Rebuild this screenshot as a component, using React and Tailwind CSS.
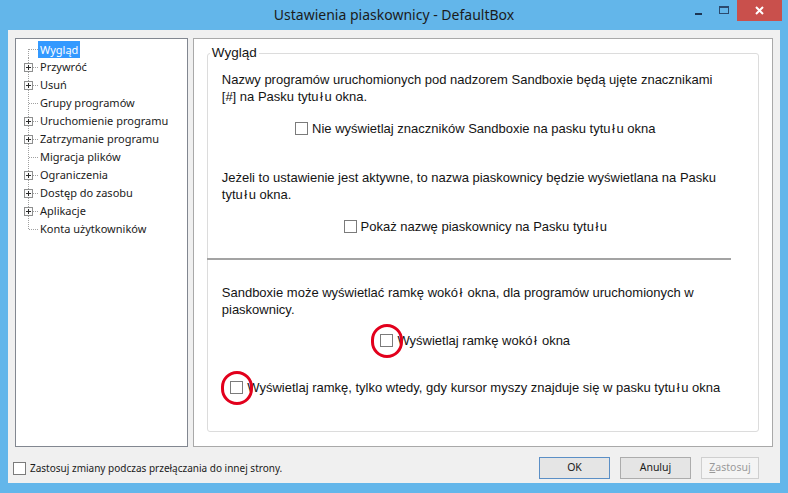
import React from "react";

const tree = [
  ["Wygląd", false],
  ["Przywróć", true],
  ["Usuń", true],
  ["Grupy programów", false],
  ["Uruchomienie programu", true],
  ["Zatrzymanie programu", true],
  ["Migracja plików", false],
  ["Ograniczenia", true],
  ["Dostęp do zasobu", true],
  ["Aplikacje", true],
  ["Konta użytkowników", false],
];

// the "ł" in this dialog's font renders with a gap on each side
const L = () => <span className="mx-[1.5px]">ł</span>;

const Gutter = ({ plus, first, last }) => (
  <svg width="22" height="18" className="shrink-0">
    <g stroke="#a0a0a0" strokeDasharray="1 1" shapeRendering="crispEdges">
      <line x1="12.5" y1={first ? 9 : 0} x2="12.5" y2={last ? 9.5 : 18} />
      <line x1="13" y1="9.5" x2="22" y2="9.5" />
    </g>
    {plus && (
      <g shapeRendering="crispEdges">
        <rect x="8.5" y="5.5" width="8" height="8" fill="#fbfbfb" stroke="#8e8f8f" />
        <line x1="10" y1="9.5" x2="15" y2="9.5" stroke="#2a2a2a" />
        <line x1="12.5" y1="7" x2="12.5" y2="12" stroke="#2a2a2a" />
      </g>
    )}
  </svg>
);

const Box = () => (
  <span className="block w-[13px] h-[13px] border border-[#7b7b7b] bg-white shrink-0" />
);

const CheckRow = ({ children, ring, className = "" }) => (
  <div className={`flex justify-center items-center h-[17px] ${className}`}>
    <span className="relative flex">
      <Box />
      {ring && (
        <span className="absolute left-1/2 top-1/2 -translate-x-1/2 -translate-y-1/2 w-[32px] h-[34px] rounded-full border-[3.5px] border-[#e2001c]" />
      )}
    </span>
    <span className="ml-[4px] whitespace-nowrap">{children}</span>
  </div>
);

export default function App() {
  return (
    <div className="w-[788px] h-[493px] bg-[#63b6ea] flex flex-col overflow-hidden">
      {/* title bar */}
      <div className="grid grid-cols-[1fr_auto_1fr] h-[30px]">
        <div />
        <div className="flex items-center pb-[1px] font-['Noto_Sans',sans-serif] text-[14px] text-[#1b1b1b]">
          Ustawienia piaskownicy - DefaultBox
        </div>
        <div className="flex justify-end items-start pr-[6px]">
          <div className="w-[26px] h-[21px] flex items-center justify-center pt-[6px]">
            <span className="block w-[7px] h-[2px] bg-[#1c3553]" />
          </div>
          <div className="w-[26px] h-[21px] flex items-center justify-center pb-[2px]">
            <span className="block w-[10px] h-[8px] border border-t-2 border-[#2b4a6e]" />
          </div>
          <div className="w-[45px] h-[21px] bg-[#c9504c] flex items-center justify-center">
            <svg width="9" height="9" viewBox="0 0 9 9">
              <path d="M1 1L8 8M8 1L1 8" stroke="#fff" strokeWidth="2" />
            </svg>
          </div>
        </div>
      </div>

      {/* dialog body */}
      <div className="flex-1 mx-[8px] mb-[10px] bg-[#f0f0f0] flex flex-col px-[7px] pt-[8px]">
        <div className="flex gap-[5px] h-[409px]">
          {/* tree */}
          <div className="w-[173px] border border-[#828790] bg-white pt-[1px] font-['Noto_Sans',sans-serif] text-[11px] text-[#1b1b1b]">
            {tree.map(([label, plus], i) => (
              <div key={label} className="flex items-center h-[18px]">
                <Gutter plus={plus} first={i === 0} last={i === tree.length - 1} />
                <span
                  className={
                    i === 0
                      ? "bg-[#3399ff] text-white px-[2px] h-[17px] leading-[17px]"
                      : "px-[2px] whitespace-nowrap"
                  }
                >
                  {label}
                </span>
              </div>
            ))}
          </div>

          {/* page */}
          <div className="w-[581px] border border-[#a9a9a9] bg-white pt-[6px] px-[13px] pb-[14px] flex flex-col font-['Liberation_Sans',Arial,sans-serif] text-[13px] leading-[17px] text-[#141414]">
            <fieldset className="flex-1 border border-[#dcdcdc] rounded-[3px] p-0 m-0 min-w-0">
              <legend className="ml-[2px] px-[2px] leading-[16px] text-[13.5px]">Wygląd</legend>
              <div className="pl-[14px] w-[521px] flex flex-col">
                <div className="mt-[10px] whitespace-nowrap">
                  Nazwy programów uruchomionych pod nadzorem Sandboxie będą ujęte znacznikami
                  <br />
                  [#] na Pasku tytu<L />u okna.
                </div>
                <CheckRow className="mt-[15px]">
                  Nie wyświetlaj znaczników Sandboxie na pasku tytu<L />u okna
                </CheckRow>

                <div className="mt-[32px] whitespace-nowrap">
                  Jeżeli to ustawienie jest aktywne, to nazwa piaskownicy będzie wyświetlana na Pasku
                  <br />
                  tytu<L />u okna.
                </div>
                <CheckRow className="mt-[15px]">
                  Pokaż nazwę piaskownicy na Pasku tytu<L />u
                </CheckRow>

                <div className="mt-[23px] -ml-[15px] w-[524px] h-[2px] bg-[#a3a3a3]" />

                <div className="mt-[24px] whitespace-nowrap">
                  Sandboxie może wyświetlać ramkę wokó<L /> okna, dla programów uruchomionych w
                  <br />
                  piaskownicy.
                </div>
                <CheckRow ring className="mt-[14px]">
                  Wyświetlaj ramkę wokó<L /> okna
                </CheckRow>
                <CheckRow ring className="mt-[30px]">
                  Wyświetlaj ramkę, tylko wtedy, gdy kursor myszy znajduje się w pasku tytu<L />u okna
                </CheckRow>
              </div>
            </fieldset>
          </div>
        </div>

        {/* bottom bar */}
        <div className="flex items-center pt-[10px] -ml-[2px] font-['Noto_Sans',sans-serif] text-[10.5px] text-[#1b1b1b]">
          <Box />
          <span className="ml-[4px] text-[10px]">Zastosuj zmiany podczas przełączania do innej strony.</span>
          <div className="ml-auto mr-[14px] flex gap-[10px]">
            <button className="w-[71px] h-[22px] border border-[#5b8fc6] bg-[#e5e5e5]">OK</button>
            <button className="w-[71px] h-[22px] border border-[#acacac] bg-[#e5e5e5]">Anuluj</button>
            <button className="w-[58px] h-[22px] border border-[#cfcfcf] bg-[#f4f4f4] text-[#9a9a9a]">
              <span className="underline">Z</span>astosuj
            </button>
          </div>
        </div>
      </div>
    </div>
  );
}
